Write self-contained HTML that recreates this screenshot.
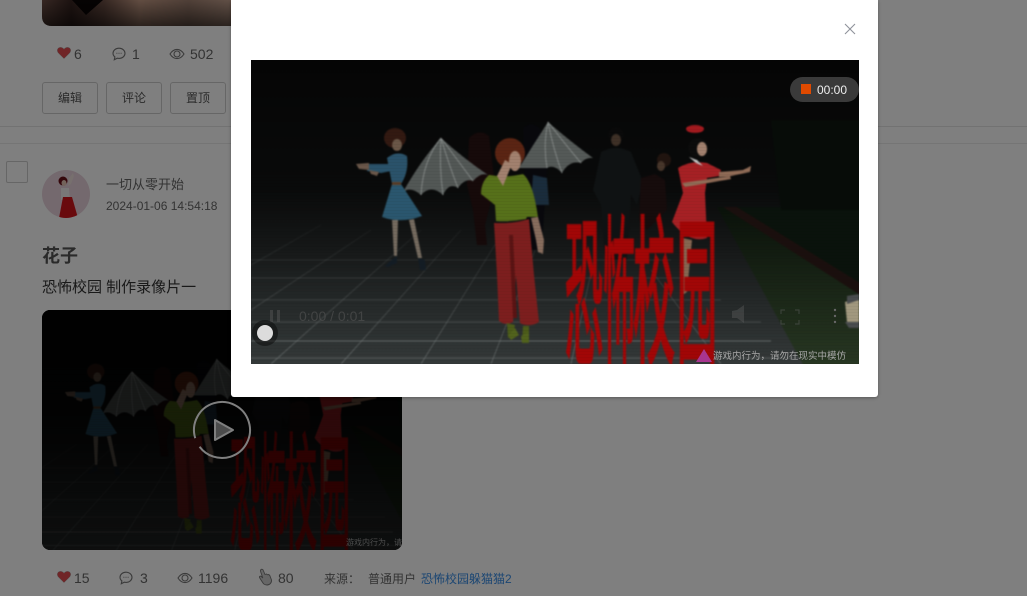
<!DOCTYPE html>
<html lang="zh"><head><meta charset="utf-8"><title>花子</title>
<style>
html,body{margin:0;padding:0;width:1027px;height:596px;overflow:hidden;background:#fff}
body{position:relative;font-family:"Liberation Sans","Noto Sans CJK SC",sans-serif;color:#666}
.a{position:absolute;white-space:nowrap}
.btn{position:absolute;top:82px;width:54px;height:30px;border:1px solid #ccc;border-radius:3px;text-align:center;line-height:30px;font-size:12px;color:#555}
.s{font-size:14px;line-height:16px;color:#666}
svg{position:absolute;overflow:hidden}
#mask{position:absolute;left:0;top:0;width:1027px;height:596px;background:rgba(0,0,0,.5)}
#modal{position:absolute;left:231px;top:0;width:647px;height:397px;background:#fff;border-radius:0 0 3px 3px;box-shadow:0 1px 3px rgba(0,0,0,.3)}
</style></head><body>

<svg width="0" height="0" style="position:absolute">
<defs>
<linearGradient id="flr" gradientUnits="userSpaceOnUse" x1="0" y1="0" x2="0" y2="304"><stop offset="0" stop-color="#050505"/><stop offset=".42" stop-color="#090a0a"/><stop offset=".6" stop-color="#151717"/><stop offset=".8" stop-color="#262a2a"/><stop offset="1" stop-color="#363b3b"/></linearGradient>
<linearGradient id="grn" x1="0" y1="0" x2="0" y2="1"><stop offset="0" stop-color="#0a120a"/><stop offset="1" stop-color="#2a3a24"/></linearGradient>
<linearGradient id="grd" gradientUnits="userSpaceOnUse" x1="0" y1="160" x2="0" y2="304"><stop offset="0" stop-color="#5a5f5f" stop-opacity=".1"/><stop offset="1" stop-color="#7a8080" stop-opacity=".6"/></linearGradient>
<linearGradient id="ph" x1="0" y1="0" x2="1" y2="0"><stop offset="0" stop-color="#6e4f46"/><stop offset=".15" stop-color="#3a2622"/><stop offset=".32" stop-color="#6e5046"/><stop offset=".5" stop-color="#c49a84"/><stop offset=".75" stop-color="#a08070"/><stop offset="1" stop-color="#c8a592"/></linearGradient>
<linearGradient id="phd" x1="0" y1="0" x2="0" y2="1"><stop offset="0" stop-color="#000" stop-opacity="0"/><stop offset="1" stop-color="#000" stop-opacity=".55"/></linearGradient>
<pattern id="scan" width="4" height="3" patternUnits="userSpaceOnUse"><rect width="4" height="1" fill="#000" opacity=".16"/></pattern>
<filter id="bl" x="-2%" y="-2%" width="104%" height="104%" color-interpolation-filters="sRGB"><feGaussianBlur stdDeviation=".7"/></filter>
<symbol id="scene" viewBox="0 0 608 304" width="608" height="304" overflow="hidden">
<g filter="url(#bl)">
<rect x="-6" y="-6" width="620" height="316" fill="#050505"/>
<rect x="-6" y="0" width="620" height="310" fill="url(#flr)"/>
<path d="M466 147L614 150V310H555Z" fill="url(#grn)"/>
<path d="M472 147L486 147L614 226V238Z" fill="#1c100e"/>
<path d="M486 147L614 147V226Z" fill="#0a130c"/>
<path d="M520 60H614V150H530Z" fill="#070d08"/>
<g stroke="url(#grd)" stroke-width="1" fill="none">
<path d="M0 200H420M0 218H440M0 240H470M0 262H510M0 298H550"/>
<path d="M170 170L20 304M210 170L90 304M250 175L170 304M290 175L240 304M345 190L320 304M400 210L470 304M120 170L0 250M70 165L0 205"/>
</g>
<path d="M0 281H520" stroke="#7a7f7f" stroke-width="1.200" opacity=".6"/>
<!-- background figures -->
<path d="M218 78Q228 68 238 76L244 125L234 165L236 185H226L222 150L216 125Z" fill="#170a0a"/>
<path d="M272 68Q282 60 290 70L296 110L292 170L286 190H276Z" fill="#08080d"/>
<path d="M282 115L296 118L298 145L280 145Z" fill="#1c2e3e"/>
<!-- bat wings -->
<path d="M190 78Q170 100 152 132Q160 126 170 135Q180 124 192 135Q198 122 207 128Q214 118 222 121Q230 112 237 115Q212 98 190 78Z" fill="#565b59"/>
<path d="M190 78Q172 100 170 135M190 78Q188 105 192 135M190 78Q198 105 207 128M190 78Q208 102 222 121" stroke="#868b89" stroke-width="1" fill="none"/>
<path d="M297 62Q282 85 268 108L296 108Q303 104 311 113Q318 100 330 103Q335 97 342 98Q320 82 297 62Z" fill="#585d5b"/>
<path d="M297 62Q292 85 296 108M297 62Q302 88 311 113M297 62Q314 84 330 103" stroke="#868b89" stroke-width="1" fill="none"/>
<!-- blue girl -->
<path d="M136 98Q146 90 156 96Q158 112 150 124H141Z" fill="#2c566e"/>
<path d="M148 96L137 104L118 104L116 111L130 113L146 110Z" fill="#2c566e"/>
<path d="M105 104L118 103L118 110L108 109Z" fill="#6e5a4c"/>
<path d="M118 110L128 112L126 116L120 114Z" fill="#6e5a4c"/>
<path d="M141 124L150 124L171 156Q150 164 131 157Z" fill="#2c5a72"/>
<rect x="141" y="122" width="9" height="3" fill="#5e4028"/>
<path d="M141 160L147 160L146 196L143 196ZM158 160L163 159L171 198L167 198Z" fill="#786e62"/>
<path d="M134 206Q140 200 146 196L146 203L137 207ZM167 198L174 200L175 210L169 210Z" fill="#141e26"/>
<ellipse cx="144" cy="78" rx="11" ry="10" fill="#341a12"/>
<ellipse cx="146" cy="85" rx="5" ry="6" fill="#6e5a4a"/>
<!-- man + rear figure -->
<path d="M350 92Q365 84 380 92L392 122L386 145L380 135L376 200L354 200L350 145L342 130Z" fill="#101314"/>
<circle cx="365" cy="75" r="8" fill="#0a0a0a"/>
<ellipse cx="365" cy="80" rx="5" ry="6" fill="#403228"/>
<path d="M390 118l14-4 10 6 2 30-20 20-8-10z" fill="#170c0c"/>
<circle cx="413" cy="100" r="7" fill="#221510"/>
<ellipse cx="410" cy="106" rx="4" ry="5" fill="#4a382c"/>
<!-- woman -->
<path d="M243 163Q262 164 278 159L283 215L288 262Q278 268 269 263L265 215L262 262Q254 266 248 261L246 215Z" fill="#82201f"/>
<path d="M258 175L262 175L266 258L262 258Z" fill="#5e1414"/>
<path d="M280 158L287 157L293 180L292 194L287 192L285 180Z" fill="#8c7060"/>
<path d="M238 115Q256 118 272 114Q282 122 287 157L276 157L275 159Q260 162 245 161L244 145L230 134Q230 122 238 115Z" fill="#5a741b"/>
<path d="M256 263L264 265L262 275L257 278ZM272 266L278 266L278 282L271 282Z" fill="#4e5e1a"/>
<path d="M257 276L264 268L268 275L260 280ZM270 276L278 272L278 283L271 283Z" fill="#55661e"/>
<circle cx="259" cy="93" r="15" fill="#5e2614"/>
<ellipse cx="264" cy="101" rx="6" ry="10" fill="#a88672"/>
<path d="M246 116L254 100L261 104L252 126Z" fill="#a88672"/>
<!-- red girl -->
<path d="M427 108Q440 100 456 103L470 110L468 116L456 118L454 133L456 178Q438 184 421 162L432 133Z" fill="#ac2226"/>
<path d="M431 123L479 116L480 119L434 127Z" fill="#96705a"/>
<path d="M468 112L492 110L500 106L499 112L480 116L468 117Z" fill="#96705a"/>
<path d="M438 97L446 100L452 106L445 103Z" fill="#c8c8c8"/>
<circle cx="447" cy="88" r="10" fill="#0c0c0c"/>
<ellipse cx="451" cy="89" rx="5" ry="7" fill="#a88672"/>
<ellipse cx="444" cy="69" rx="9" ry="4" fill="#a81b20"/>
<path d="M431 178L441 180L436 232L430 236Z" fill="#8c6a54"/>
<!-- right box -->
<path d="M594 242L608 238V262L596 262Z" fill="#a89f84"/>
<path d="M596 236L608 234V240L596 244ZM594 262H608V268H598Z" fill="#4c4f51"/>
<!-- red text -->
<g fill="#a80606" stroke="#a80606" stroke-width="2.500" font-family="'Noto Sans CJK SC',sans-serif">
<text transform="translate(314,292) scale(.38,1.62)" font-size="100">恐</text>
<text transform="translate(352,292) scale(.32,1.62)" font-size="100">怖</text>
<text transform="translate(382,292) scale(.42,1.62)" font-size="100">校</text>
<text transform="translate(426,292) scale(.40,1.62)" font-size="100">园</text>
</g>
<rect x="-6" y="-6" width="620" height="316" fill="url(#scan)"/>
</g>
</symbol>
</defs>
</svg>

<!-- page beneath -->
<svg style="left:42px;top:0" width="195" height="26"><path d="M0 0H195V26H10Q0 26 0 16Z" fill="url(#ph)"/><path d="M30 0H61L44 15Z" fill="#0c0606"/><path d="M0 0H195V26H10Q0 26 0 16Z" fill="url(#phd)"/></svg>

<svg style="left:57px;top:47px" width="14" height="12" viewBox="0 0 16 14"><path d="M8 13.500L1.600 7.200C-.4 5-.1 2 2 .9 4-.1 6.500.5 8 2.600 9.500.5 12-.1 14 .9c2.100 1.100 2.400 4.100.4 6.300z" fill="#e04a4e" stroke="#999" stroke-width=".5"/></svg>
<div class="a s" style="left:74px;top:46px">6</div>
<svg style="left:112px;top:47px" width="14" height="14" viewBox="0 0 14 14"><path d="M7 1.200C3.700 1.200 1 3.400 1 6.300c0 1.500.7 2.700 1.900 3.600L2.300 12.700 5.200 11.200c.6.100 1.200.2 1.800.2 3.300 0 6-2.200 6-5.100S10.300 1.200 7 1.200z" fill="none" stroke="#777" stroke-width="1.100"/><path d="M4.500 6.300h.8M6.600 6.300h.8M8.700 6.300h.8" stroke="#777" stroke-width="1.100"/></svg>
<div class="a s" style="left:132px;top:46px">1</div>
<svg style="left:169px;top:47px" width="16" height="14" viewBox="0 0 16 14"><path d="M1 7c2-3.200 4.400-4.600 7-4.600S13 3.800 15 7c-2 3.200-4.400 4.600-7 4.600S3 10.200 1 7z" fill="none" stroke="#777" stroke-width="1.100"/><circle cx="8" cy="7" r="3" fill="none" stroke="#777" stroke-width="1.100"/></svg>
<div class="a s" style="left:190px;top:46px">502</div>

<div class="btn" style="left:42px">编辑</div>
<div class="btn" style="left:106px">评论</div>
<div class="btn" style="left:170px">置顶</div>

<div class="a" style="left:0;top:126px;width:1027px;height:1px;background:#e4e4e4"></div>
<div class="a" style="left:0;top:143px;width:1027px;height:1px;background:#eaeaea"></div>

<div class="a" style="left:6px;top:161px;width:20px;height:20px;border:1px solid #ccc;border-radius:2px"></div>
<svg style="left:42px;top:170px" width="48" height="48" viewBox="0 0 48 48"><circle cx="24" cy="24" r="24" fill="#e8d2dc"/><clipPath id="cp"><circle cx="24" cy="24" r="24"/></clipPath><g clip-path="url(#cp)"><path d="M19 18h8l1 12h-9z" fill="#f3f0f0"/><path d="M27 8l4-5 1 3-3 8-3 2z" fill="#eee0dc"/><path d="M21 27h9l6 21H17z" fill="#d3141b"/><circle cx="21" cy="11" r="4.500" fill="#6a0f18"/><ellipse cx="22" cy="13" rx="2.500" ry="3" fill="#e6c6b6"/></g></svg>
<div class="a" style="left:106px;top:177px;font-size:13px;line-height:16px;color:#666">一切从零开始</div>
<div class="a" style="left:106px;top:198px;font-size:12px;line-height:16px;color:#666">2024-01-06 14:54:18</div>
<div class="a" style="left:42px;top:245px;font-size:18px;line-height:22px;font-weight:700;color:#555">花子</div>
<div class="a" style="left:42px;top:279px;font-size:15px;line-height:18px;color:#333">恐怖校园 制作录像片一</div>

<svg style="left:42px;top:310px" width="360" height="240" viewBox="0 0 360 240">
<clipPath id="cv"><rect width="360" height="240" rx="8"/></clipPath>
<g clip-path="url(#cv)"><rect width="360" height="240" fill="#000"/>
<g transform="translate(-60,0) scale(.79)"><use href="#scene" width="608" height="304"/></g>
<rect width="360" height="240" fill="#000" opacity=".45"/>
<text x="304" y="235" font-size="8" fill="#999" font-family="'Liberation Sans','Noto Sans CJK SC',sans-serif">游戏内行为，请勿</text>
</g>
<circle cx="180" cy="120" r="28" fill="none" stroke="#fff" stroke-width="2" stroke-dasharray="166 10" transform="rotate(163 180 120)"/>
<path d="M173 110L191 120L173 130Z" fill="#c9c9c9" fill-opacity=".75" stroke="#fff" stroke-width="2" stroke-linejoin="round"/>
</svg>

<svg style="left:57px;top:571px" width="14" height="12" viewBox="0 0 16 14"><path d="M8 13.500L1.600 7.200C-.4 5-.1 2 2 .9 4-.1 6.500.5 8 2.600 9.500.5 12-.1 14 .9c2.100 1.100 2.400 4.100.4 6.300z" fill="#e04a4e" stroke="#999" stroke-width=".5"/></svg>
<div class="a s" style="left:74px;top:570px">15</div>
<svg style="left:119px;top:571px" width="14" height="14" viewBox="0 0 14 14"><path d="M7 1.200C3.700 1.200 1 3.400 1 6.300c0 1.500.7 2.700 1.900 3.600L2.300 12.700 5.200 11.200c.6.100 1.200.2 1.800.2 3.300 0 6-2.200 6-5.100S10.300 1.200 7 1.200z" fill="none" stroke="#777" stroke-width="1.100"/><path d="M4.500 6.300h.8M6.600 6.300h.8M8.700 6.300h.8" stroke="#777" stroke-width="1.100"/></svg>
<div class="a s" style="left:140px;top:570px">3</div>
<svg style="left:177px;top:571px" width="16" height="14" viewBox="0 0 16 14"><path d="M1 7c2-3.200 4.400-4.600 7-4.600S13 3.800 15 7c-2 3.200-4.400 4.600-7 4.600S3 10.200 1 7z" fill="none" stroke="#777" stroke-width="1.100"/><circle cx="8" cy="7" r="3" fill="none" stroke="#777" stroke-width="1.100"/></svg>
<div class="a s" style="left:198px;top:570px">1196</div>
<svg style="left:257px;top:568px" width="16" height="18" viewBox="0 0 16 18"><path d="M4 1.500c1-.6 2 0 2.300 1L8 6.500l1.500-.5 1 .8 1.300-.3 1 1L14.500 12c.3 2.500-1.500 5-4.500 5-2.500 0-3.500-1-5-3.500L2.500 9.500c-.4-1 .8-1.800 1.700-1.100L5.800 10 3.500 3.300C3.300 2.600 3.500 1.900 4 1.500z" fill="#ccc" stroke="#777" stroke-width=".9"/></svg>
<div class="a s" style="left:278px;top:570px">80</div>
<div class="a" style="left:324px;top:571px;font-size:12px;line-height:16px;color:#666">来源：</div>
<div class="a" style="left:368px;top:571px;font-size:12px;line-height:16px;color:#666">普通用户</div>
<div class="a" style="left:421px;top:571px;font-size:12px;line-height:16px;color:#3a8ee6">恐怖校园躲猫猫2</div>

<div id="mask"></div>

<div id="modal">
<svg style="left:613px;top:23px" width="12" height="12" viewBox="0 0 12 12"><path d="M1 1L11 11M11 1L1 11" stroke="#8f929a" stroke-width="1.100"/></svg>
<svg style="left:20px;top:60px" width="608" height="304" viewBox="0 0 608 304">
<use href="#scene" width="608" height="304"/>
<rect x="19" y="250" width="3" height="12" fill="#555" opacity=".5"/><rect x="26" y="250" width="3" height="12" fill="#555" opacity=".5"/>
<text x="48" y="261" font-size="14" fill="#555" opacity=".6" font-family="'Liberation Sans',sans-serif">0:00 / 0:01</text>
<path d="M481 251l5-1 7-5v18l-7-5h-5z" fill="#666" opacity=".35"/>
<path d="M530 254v-4h4M544 250h4v4M548 260v4h-4M534 264h-4v-4" stroke="#666" fill="none" stroke-width="1.200" opacity=".4"/>
<circle cx="584" cy="250" r="1.200" fill="#666"/><circle cx="584" cy="256" r="1.200" fill="#666"/><circle cx="584" cy="262" r="1.200" fill="#666"/>
<circle cx="14" cy="273" r="13" fill="#000" opacity=".4"/>
<circle cx="14" cy="273" r="8" fill="#dcdcdc"/>
<path d="M453 289L461 302H445Z" fill="#a8358f"/>
<text x="462" y="299" font-size="9.500" fill="#a8a8a8" font-family="'Liberation Sans','Noto Sans CJK SC',sans-serif">游戏内行为，请勿在现实中模仿</text>
<rect x="539" y="17" width="69" height="25" rx="12.500" fill="#3a3a3a"/>
<rect x="550" y="24" width="10" height="10" fill="#e04a00"/>
<text x="566" y="34" font-size="12" fill="#eee" font-family="'Liberation Sans',sans-serif">00:00</text>
</svg>
</div>
</body></html>
